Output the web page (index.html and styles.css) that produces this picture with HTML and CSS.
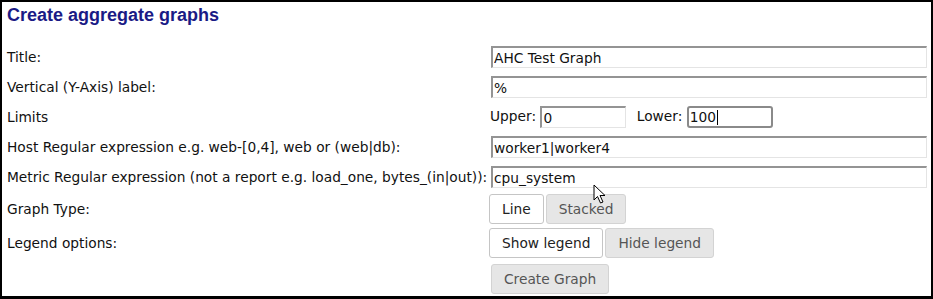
FILE: index.html
```html
<!DOCTYPE html>
<html lang="en">
<head>
    <meta charset="UTF-8">
    <title>Create aggregate graphs</title>
    <link rel="stylesheet" href="styles.css">
</head>
<body>
    <div class="frame">
        <h3>Create aggregate graphs</h3>
        <table class="form">
            <tr>
                <td class="label">Title:</td>
                <td><input type="text" class="wide" value="AHC Test Graph"></td>
            </tr>
            <tr>
                <td class="label">Vertical (Y-Axis) label:</td>
                <td><input type="text" class="wide" value="%"></td>
            </tr>
            <tr>
                <td class="label">Limits</td>
                <td class="limits">
                    Upper: <input type="text" class="short" value="0">
                    <span class="lower-label">Lower:</span>
                    <span class="caret-wrap"><input type="text" class="short focused" value="100"><span class="caret"></span></span>
                </td>
            </tr>
            <tr>
                <td class="label">Host Regular expression e.g. web-[0,4], web or (web|db):</td>
                <td><input type="text" class="wide" value="worker1|worker4"></td>
            </tr>
            <tr>
                <td class="label">Metric Regular expression (not a report e.g. load_one, bytes_(in|out)):</td>
                <td><input type="text" class="wide" value="cpu_system"></td>
            </tr>
            <tr class="btn-row">
                <td class="label">Graph Type:</td>
                <td>
                    <div class="buttonset">
                        <button class="btn active">Line</button>
                        <button class="btn">Stacked</button>
                    </div>
                </td>
            </tr>
            <tr class="btn-row">
                <td class="label">Legend options:</td>
                <td>
                    <div class="buttonset">
                        <button class="btn active">Show legend</button>
                        <button class="btn">Hide legend</button>
                    </div>
                </td>
            </tr>
            <tr class="btn-row">
                <td></td>
                <td><button class="btn create">Create Graph</button></td>
            </tr>
        </table>

        <svg class="pointer" width="14" height="21" viewBox="0 0 14 21">
            <path d="M1 1 L1 16 L4.5 12.5 L7.5 19 L10 18 L7 11.5 L12 11.5 Z" fill="#fff" stroke="#000" stroke-width="1" stroke-linejoin="round"/>
        </svg>
    </div>
</body>
</html>
```

FILE: styles.css
```css
body { margin: 0; background: #fff; font-family: "DejaVu Sans", Verdana, sans-serif; font-size: 13.75px; color: #111; }
.frame { position: relative; height: 299px; box-sizing: border-box; border: 2px solid #000; border-width: 2px 2px 3px 2px; }
h3 { margin: 0 0 16px; padding: 2px 5px 0; line-height: 22px; font-family: "Liberation Sans", Arial, sans-serif; font-size: 18px; font-weight: bold; color: #1a1a85; }

.form { border-collapse: collapse; border-spacing: 0; }
.form td { padding: 0; height: 30px; vertical-align: middle; }
.form td.label { width: 482px; padding-left: 5px; white-space: nowrap; }
.form .btn-row td { height: 34px; }

input { font-family: "DejaVu Sans", Verdana, sans-serif; font-size: 13.75px; color: #111; height: 22px; box-sizing: border-box; padding: 0 1px; margin: 0; vertical-align: middle; background: #fff; border-style: solid; border-width: 2px 1px 1px 2px; border-color: #949494 #e4e4e4 #e4e4e4 #949494; outline: none; }
input.wide { width: 436px; margin-left: 2px; }
input.short { width: 86px; }
input.focused { border: 2px solid #8a8a8a; border-radius: 3px; }

.limits { padding-left: 1px !important; }
.lower-label { margin-left: 6px; }
.caret-wrap { position: relative; display: inline-block; vertical-align: middle; }
.caret { position: absolute; left: 30px; top: 4px; width: 1px; height: 15px; background: #000; }

.buttonset { display: flex; gap: 2px; }
.btn { font-family: "DejaVu Sans", Verdana, sans-serif; font-size: 13.75px; height: 30px; padding: 0 12px; border: 1px solid #d3d3d3; border-radius: 3px; background: #e6e6e6; color: #555; cursor: pointer; }
.btn.active { background: #fff; border-color: #c5c5c5; color: #222; }
.btn.create { margin: 4px 0 0 2px; }

.pointer { position: absolute; left: 591px; top: 182px; }
```
